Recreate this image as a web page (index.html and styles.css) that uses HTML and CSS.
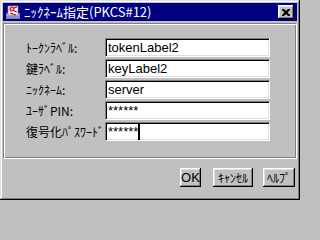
FILE: index.html
```html
<!DOCTYPE html>
<html lang="ja">
<head>
<meta charset="utf-8">
<title>ﾆｯｸﾈｰﾑ指定(PKCS#12)</title>
<link rel="stylesheet" href="styles.css">
</head>
<body>
<div class="window">
  <div class="titlebar">
    <svg class="app-icon" width="16" height="16" viewBox="0 0 16 16">
      <rect x="1" y="9" width="14" height="6" fill="#8080c0"/>
      <rect x="2" y="10" width="12" height="4" fill="#c0c0e0"/>
      <rect x="3" y="2" width="10" height="9" fill="#ffffff"/>
      <rect x="3" y="2" width="10" height="9" fill="none" stroke="#808080" stroke-width="0.8"/>
      <circle cx="7" cy="5" r="2.6" fill="#e02040"/>
      <circle cx="7" cy="5" r="1.2" fill="#ffb0c0"/>
      <path d="M9 4 L12 3 M9 7 L12 8 M5 9 L11 11" stroke="#a00030" stroke-width="1"/>
      <path d="M2 13 L14 13" stroke="#6060a0" stroke-width="1"/>
    </svg>
    <span class="title">ﾆｯｸﾈｰﾑ指定(PKCS#12)</span>
    <div class="close-btn">
      <svg width="8" height="7" viewBox="0 0 8 7">
        <path d="M0 0h2l2 2 2-2h2v1l-2.5 2.5 2.5 2.5v1h-2l-2-2-2 2h-2v-1l2.5-2.5-2.5-2.5z" fill="#000"/>
      </svg>
    </div>
  </div>
  <div class="panel">
    <div class="form">
      <label class="label">ﾄｰｸﾝﾗﾍﾞﾙ:</label>
      <div class="field">tokenLabel2</div>
      <label class="label">鍵ﾗﾍﾞﾙ:</label>
      <div class="field">keyLabel2</div>
      <label class="label">ﾆｯｸﾈｰﾑ:</label>
      <div class="field">server</div>
      <label class="label">ﾕｰｻﾞPIN:</label>
      <div class="field">******</div>
      <label class="label">復号化ﾊﾟｽﾜｰﾄﾞ</label>
      <div class="field">******<span class="caret"></span></div>
    </div>
  </div>
  <div class="buttons">
    <button class="btn btn-ok">OK</button>
    <button class="btn btn-cancel">ｷｬﾝｾﾙ</button>
    <button class="btn btn-help">ﾍﾙﾌﾟ</button>
  </div>
</div>
</body>
</html>
```

FILE: styles.css
```css
* {
  box-sizing: border-box;
}

html, body {
  margin: 0;
  padding: 0;
  background: #c0c0c0;
}

body {
  width: 300px;
  height: 200px;
  overflow: hidden;
  font-family: "Noto Sans CJK JP", "Liberation Sans", sans-serif;
  font-size: 12px;
  color: #000;
}

.window {
  width: 300px;
  height: 200px;
  padding: 3px;
  background: #c0c0c0;
  box-shadow: inset -1px -1px #000, inset 1px 1px #dfdfdf,
              inset -2px -2px #808080, inset 2px 2px #fff;
  display: flex;
  flex-direction: column;
}

.titlebar {
  height: 18px;
  background: #000080;
  display: flex;
  align-items: center;
  flex-shrink: 0;
}

.app-icon {
  margin-left: 2px;
  flex-shrink: 0;
}

.title {
  margin-left: 3px;
  color: #fff;
  font-size: 13px;
  line-height: 18px;
  white-space: nowrap;
  flex: 1;
}

.close-btn {
  width: 16px;
  height: 14px;
  margin-right: 3px;
  background: #c0c0c0;
  box-shadow: inset -1px -1px #000, inset 1px 1px #fff,
              inset -2px -2px #808080, inset 2px 2px #dfdfdf;
  display: flex;
  align-items: center;
  justify-content: center;
}

.close-btn svg {
  display: block;
  margin-left: -1px;
}

.panel {
  margin-top: 2px;
  height: 136px;
  border: 1px solid;
  border-color: #808080 #fff #fff #808080;
  box-shadow: inset 1px 1px #fff, inset -1px -1px #808080;
  padding: 14px 0 0 22px;
}

.form {
  display: grid;
  grid-template-columns: 79px 165px;
  grid-auto-rows: 19px;
  row-gap: 2px;
}

.label {
  font-size: 12px;
  line-height: 19px;
  white-space: nowrap;
}

.field {
  position: relative;
  background: #fff;
  border: 1px solid;
  border-color: #808080 #fff #fff #808080;
  box-shadow: inset 1px 1px #000, inset -1px -1px #dfdfdf;
  padding-left: 2px;
  font-family: "Liberation Sans", sans-serif;
  font-size: 13px;
  line-height: 17px;
  white-space: nowrap;
}

.caret {
  display: inline-block;
  width: 2px;
  height: 17px;
  background: #000;
  vertical-align: top;
  margin-left: 0;
}

.buttons {
  margin-top: 9px;
  margin-right: 2px;
  display: flex;
  justify-content: flex-end;
}

.btn {
  height: 19px;
  padding: 0;
  border: none;
  background: #c0c0c0;
  box-shadow: inset -1px -1px #000, inset 1px 1px #fff,
              inset -2px -2px #808080, inset 2px 2px #dfdfdf;
  font-family: "Noto Sans CJK JP", "Liberation Sans", sans-serif;
  font-size: 12px;
  line-height: 17px;
  color: #000;
}

.btn-ok {
  width: 21px;
  font-family: "Liberation Sans", sans-serif;
  font-size: 13px;
}

.btn-cancel {
  width: 40px;
  margin-left: 12px;
}

.btn-help {
  width: 32px;
  margin-left: 10px;
}
```
